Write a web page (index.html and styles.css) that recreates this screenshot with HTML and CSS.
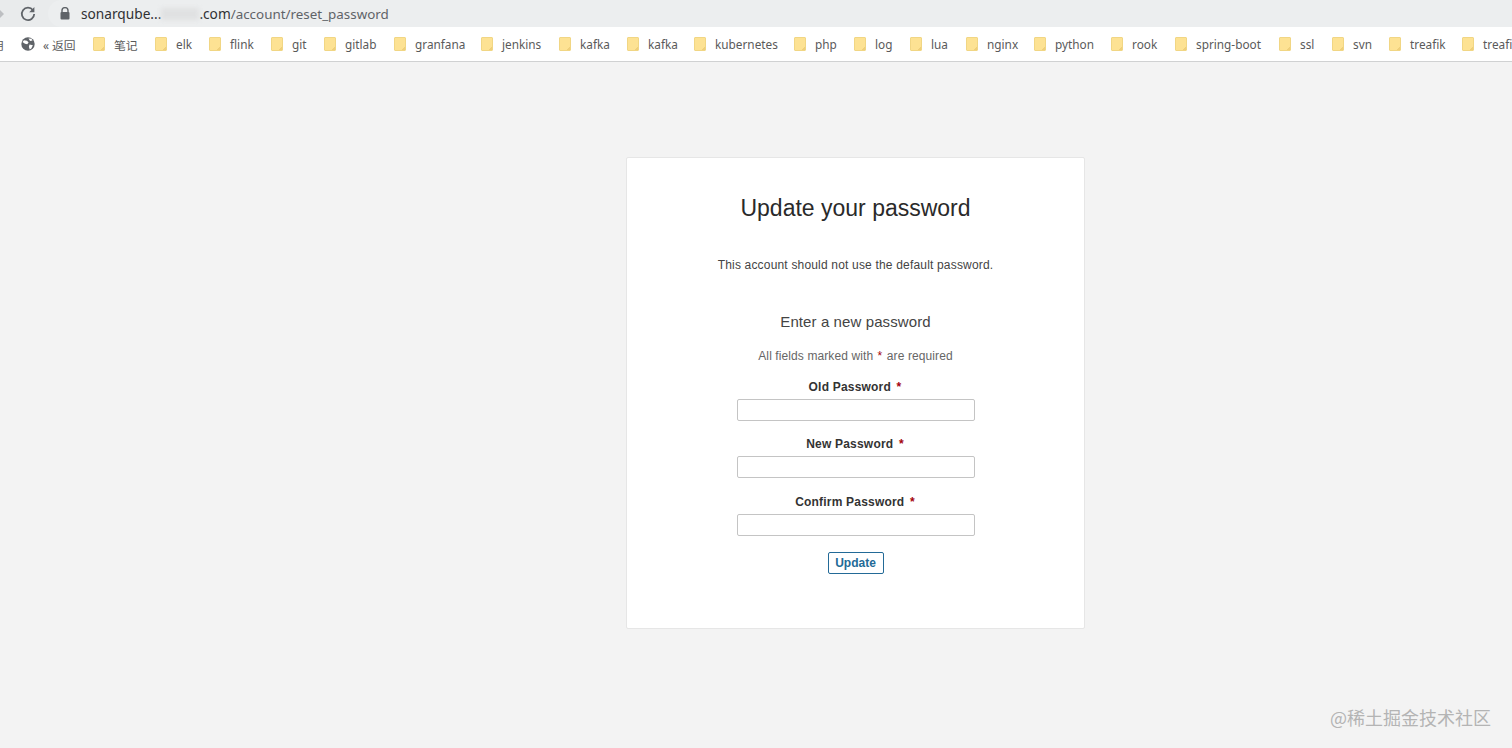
FILE: index.html
```html
<!DOCTYPE html>
<html lang="en">
<head>
    <meta charset="UTF-8">
    <title>Update your password</title>
    <link rel="stylesheet" href="styles.css">
</head>
<body>
    <div class="toolbar">
        <svg class="nav-forward" width="8" height="12" viewBox="0 0 8 12"><path d="M1 0l6 6-6 6z" fill="#bdbfc2"/></svg>
        <svg class="nav-reload" width="16" height="16" viewBox="0 0 16 16"><path d="M13 4.2A6.2 6.2 0 1 0 14.2 8" fill="none" stroke="#5f6368" stroke-width="1.8"/><path d="M14.4 1v5.2H9.2z" fill="#5f6368"/></svg>
        <div class="omnibox">
            <svg class="lock" width="10" height="13" viewBox="0 0 10 13"><path d="M2 5.5V3.6a3 3 0 0 1 6 0v1.9" fill="none" stroke="#5f6368" stroke-width="1.4"/><rect x="0.5" y="5" width="9" height="7.5" rx="1" fill="#5f6368"/></svg>
            <span class="url-host">sonarqube...</span><span class="url-mask"></span><span class="url-host">.com</span><span class="url-path">/account/reset_password</span>
        </div>
    </div>
    <div class="bookmarks">
        <span class="bm-cut">用</span>
        <div class="bm bm-back">
            <svg width="14" height="14" viewBox="0 0 14 14"><circle cx="7" cy="7" r="6.7" fill="#5f6368"/><path d="M3 3.2l3 .6 1.6 1.8-1.4 1.6-2.2-.4L1.5 5zM8.5 7.6l3.4.6-1.6 3.4-1.6.8-.8-2.6z" fill="#fff"/><path d="M7.5 1.5l3 .3 1 1.7-2.4.6z" fill="#fff"/></svg>
            <span>« 返回</span>
        </div>
        <div class="bm"><i class="folder"></i><span>笔记</span></div>
        <div class="bm"><i class="folder"></i><span>elk</span></div>
        <div class="bm"><i class="folder"></i><span>flink</span></div>
        <div class="bm"><i class="folder"></i><span>git</span></div>
        <div class="bm"><i class="folder"></i><span>gitlab</span></div>
        <div class="bm"><i class="folder"></i><span>granfana</span></div>
        <div class="bm"><i class="folder"></i><span>jenkins</span></div>
        <div class="bm"><i class="folder"></i><span>kafka</span></div>
        <div class="bm"><i class="folder"></i><span>kafka</span></div>
        <div class="bm"><i class="folder"></i><span>kubernetes</span></div>
        <div class="bm"><i class="folder"></i><span>php</span></div>
        <div class="bm"><i class="folder"></i><span>log</span></div>
        <div class="bm"><i class="folder"></i><span>lua</span></div>
        <div class="bm"><i class="folder"></i><span>nginx</span></div>
        <div class="bm"><i class="folder"></i><span>python</span></div>
        <div class="bm"><i class="folder"></i><span>rook</span></div>
        <div class="bm"><i class="folder"></i><span>spring-boot</span></div>
        <div class="bm"><i class="folder"></i><span>ssl</span></div>
        <div class="bm"><i class="folder"></i><span>svn</span></div>
        <div class="bm"><i class="folder"></i><span>treafik</span></div>
        <div class="bm"><i class="folder"></i><span>treafik</span></div>
    </div>

    <div class="page">
        <div class="card">
            <h1 class="title">Update your password</h1>
            <p class="notice">This account should not use the default password.</p>
            <h2 class="subtitle">Enter a new password</h2>
            <p class="hint">All fields marked with <em class="req">*</em> are required</p>
            <form class="form">
                <div class="field">
                    <label for="old">Old Password <em class="req">*</em></label>
                    <input id="old" type="password">
                </div>
                <div class="field">
                    <label for="new">New Password <em class="req">*</em></label>
                    <input id="new" type="password">
                </div>
                <div class="field">
                    <label for="confirm">Confirm Password <em class="req">*</em></label>
                    <input id="confirm" type="password">
                </div>
                <button class="btn" type="button">Update</button>
            </form>
        </div>
    </div>

    <div class="watermark">@稀土掘金技术社区</div>
</body>
</html>
```

FILE: styles.css
```css
html, body {
    height: 100%;
    margin: 0;
    overflow: hidden;
}
body {
    display: flex;
    flex-direction: column;
    font-family: "Liberation Sans", Arial, sans-serif;
    background: #f3f3f3;
}

/* browser chrome */
.toolbar {
    height: 27px;
    flex: none;
    display: flex;
    align-items: center;
    background: #e9ebec;
    overflow: hidden;
}
.nav-forward {
    margin-left: -3px;
    margin-top: 1px;
}
.nav-reload {
    margin-left: 15px;
}
.omnibox {
    display: flex;
    align-items: center;
    height: 27px;
    margin-left: 12px;
    padding-left: 12px;
    flex: 1;
    border-radius: 14px 0 0 14px;
    background: #eceeef;
    font-family: "Noto Sans", sans-serif;
    font-size: 13.7px;
}
.lock {
    margin-right: 11px;
}
.url-host {
    color: #303134;
}
.url-mask {
    width: 38px;
    height: 12px;
    background: #e0e1e2;
    filter: blur(2px);
}
.url-path {
    font-size: 13.4px;
    color: #5f6368;
}

.bookmarks {
    height: 34px;
    flex: none;
    display: grid;
    grid-template-columns: 21px 72px 62px 54px 62px 53px 70px 87px 78px 68px 67px 100px 60px 56px 56px 68px 77px 64px 104px 53px 57px 73px 50px;
    align-items: center;
    background: #fff;
    border-bottom: 1px solid #d0d1d2;
    overflow: hidden;
    font-family: "Noto Sans", "Noto Sans CJK SC", sans-serif;
    font-size: 11.8px;
    color: #5a5a5a;
    white-space: nowrap;
}
.bm-cut {
    width: 4px;
    overflow: hidden;
    direction: rtl;
}
.bm {
    display: flex;
    align-items: center;
    gap: 9px;
    min-width: 0;
}
.bm-back {
    gap: 8px;
}
.folder {
    width: 12px;
    height: 14px;
    background: linear-gradient(135deg, #fde293 82%, #efcf7a 82%);
    border: 1px solid #f1d684;
    border-radius: 1px;
    box-sizing: border-box;
    display: block;
    flex: none;
}

/* page */
.page {
    flex: 1;
    display: flex;
    justify-content: center;
    align-items: flex-start;
    padding-top: 95px;
    padding-left: 199px;
}
.card {
    width: 459px;
    height: 472px;
    box-sizing: border-box;
    background: #fff;
    border: 1px solid #e6e6e6;
    border-radius: 2px;
    text-align: center;
    color: #444;
}
.title {
    margin: 36px 0 0;
    font-size: 23px;
    font-weight: 400;
    line-height: 28px;
    color: #2a2a2a;
}
.notice {
    margin: 35px 0 0;
    font-size: 12px;
    letter-spacing: 0.18px;
    line-height: 16px;
    color: #444;
}
.subtitle {
    margin: 39px 0 0;
    font-size: 15px;
    letter-spacing: 0.1px;
    font-weight: 400;
    line-height: 20px;
    color: #444;
}
.hint {
    margin: 16px 0 0;
    font-size: 12px;
    letter-spacing: 0.1px;
    line-height: 16px;
    color: #666;
}
.req {
    font-style: normal;
    color: #a4030f;
    margin: 0 1px;
}
.form {
    display: flex;
    flex-direction: column;
    align-items: center;
    margin-top: 15px;
}
.field {
    display: flex;
    flex-direction: column;
    align-items: center;
    margin-bottom: 15px;
}
.field + .field + .field {
    margin-top: 1px;
}
.field label {
    font-size: 12px;
    letter-spacing: 0.2px;
    font-weight: 700;
    line-height: 16px;
    margin-bottom: 4px;
    color: #333;
}
.field .req {
    margin-left: 2px;
}
.field input {
    width: 238px;
    height: 22px;
    box-sizing: border-box;
    margin: 0;
    padding: 0 6px;
    background: #fff;
    border: 1px solid #c4c4c4;
    border-radius: 2px;
}
.btn {
    width: 56px;
    height: 22px;
    margin-top: 1px;
    padding: 0;
    background: #fff;
    border: 1px solid #236a97;
    border-radius: 2px;
    font-family: inherit;
    font-size: 12px;
    font-weight: 700;
    color: #236a97;
}

.watermark {
    position: absolute;
    top: 705px;
    left: 1330px;
    font-family: "Noto Sans CJK SC", sans-serif;
    font-size: 18px;
    line-height: 24px;
    color: #b4b4b4;
}
```
